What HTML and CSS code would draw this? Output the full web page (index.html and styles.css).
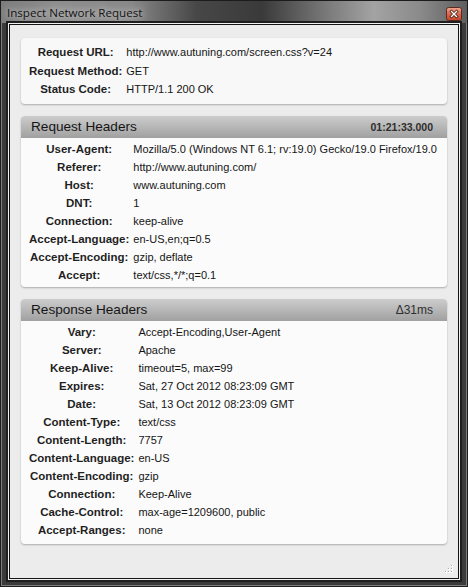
FILE: index.html
```html
<!DOCTYPE html>
<html>
<head>
<meta charset="utf-8">
<link rel="stylesheet" href="styles.css">
</head>
<body>
<div class="window">
  <div class="titlebar">
    <span class="title">Inspect Network Request</span>
    <svg class="close" width="16" height="14" viewBox="0 0 16 14">
      <defs>
        <linearGradient id="cg" x1="0" y1="0" x2="0" y2="1">
          <stop offset="0" stop-color="#f0a793"/>
          <stop offset="0.5" stop-color="#d9674c"/>
          <stop offset="1" stop-color="#c4442a"/>
        </linearGradient>
      </defs>
      <rect x="0.5" y="0.5" width="15" height="13" rx="2" fill="url(#cg)" stroke="#5b2a1e"/>
      <path d="M5.5 4.5 L10.5 9.5 M10.5 4.5 L5.5 9.5" stroke="#4a1a10" stroke-width="3" stroke-linecap="square"/>
      <path d="M5.5 4.5 L10.5 9.5 M10.5 4.5 L5.5 9.5" stroke="#fff" stroke-width="1.4" stroke-linecap="square"/>
    </svg>
  </div>
  <div class="client">
    <div class="card summary">
      <table class="kv">
        <tr><th>Request URL:</th><td>http://www.autuning.com/screen.css?v=24</td></tr>
        <tr><th>Request Method:</th><td>GET</td></tr>
        <tr><th>Status Code:</th><td>HTTP/1.1 200 OK</td></tr>
      </table>
    </div>

    <div class="card panel">
      <div class="panel-head"><span class="panel-title">Request Headers</span><span class="meta meta-time">01:21:33.000</span></div>
      <div class="panel-body">
        <table class="kv">
          <tr><th>User-Agent:</th><td>Mozilla/5.0 (Windows NT 6.1; rv:19.0) Gecko/19.0 Firefox/19.0</td></tr>
          <tr><th>Referer:</th><td>http://www.autuning.com/</td></tr>
          <tr><th>Host:</th><td>www.autuning.com</td></tr>
          <tr><th>DNT:</th><td>1</td></tr>
          <tr><th>Connection:</th><td>keep-alive</td></tr>
          <tr><th>Accept-Language:</th><td>en-US,en;q=0.5</td></tr>
          <tr><th>Accept-Encoding:</th><td>gzip, deflate</td></tr>
          <tr><th>Accept:</th><td>text/css,*/*;q=0.1</td></tr>
        </table>
      </div>
    </div>

    <div class="card panel">
      <div class="panel-head"><span class="panel-title">Response Headers</span><span class="meta meta-delta">Δ31ms</span></div>
      <div class="panel-body response">
        <table class="kv">
          <tr><th>Vary:</th><td>Accept-Encoding,User-Agent</td></tr>
          <tr><th>Server:</th><td>Apache</td></tr>
          <tr><th>Keep-Alive:</th><td>timeout=5, max=99</td></tr>
          <tr><th>Expires:</th><td>Sat, 27 Oct 2012 08:23:09 GMT</td></tr>
          <tr><th>Date:</th><td>Sat, 13 Oct 2012 08:23:09 GMT</td></tr>
          <tr><th>Content-Type:</th><td>text/css</td></tr>
          <tr><th>Content-Length:</th><td>7757</td></tr>
          <tr><th>Content-Language:</th><td>en-US</td></tr>
          <tr><th>Content-Encoding:</th><td>gzip</td></tr>
          <tr><th>Connection:</th><td>Keep-Alive</td></tr>
          <tr><th>Cache-Control:</th><td>max-age=1209600, public</td></tr>
          <tr><th>Accept-Ranges:</th><td>none</td></tr>
        </table>
      </div>
    </div>

    <svg class="grip" width="10" height="10" viewBox="0 0 10 10">
      <g fill="#fff">
        <rect x="7" y="1" width="2" height="2"/>
        <rect x="4" y="4" width="2" height="2"/><rect x="7" y="4" width="2" height="2"/>
        <rect x="1" y="7" width="2" height="2"/><rect x="4" y="7" width="2" height="2"/><rect x="7" y="7" width="2" height="2"/>
      </g>
      <g fill="#a8a8a8">
        <rect x="7" y="1" width="1" height="1"/>
        <rect x="4" y="4" width="1" height="1"/><rect x="7" y="4" width="1" height="1"/>
        <rect x="1" y="7" width="1" height="1"/><rect x="4" y="7" width="1" height="1"/><rect x="7" y="7" width="1" height="1"/>
      </g>
    </svg>
  </div>
</div>
</body>
</html>
```

FILE: styles.css
```css
html, body {
  margin: 0;
  padding: 0;
}
body {
  width: 468px;
  height: 587px;
  overflow: hidden;
  background: #2f2f2f;
}
.window {
  width: 468px;
  height: 587px;
  box-sizing: border-box;
  display: flex;
  flex-direction: column;
  background: #3b3b3b;
  border: 1px solid #1c1c1c;
  box-shadow: inset 0 0 0 1px #7d7d7d;
}
.titlebar {
  height: 22px;
  flex: none;
  display: flex;
  align-items: center;
  justify-content: space-between;
  padding: 0 5px 0 6px;
  background: linear-gradient(to right, #7c7c7c 0%, #8e8e8e 12%, #888 28%, #474747 42%, #3a3a3a 56%, #7a7a7a 70%, #a3a3a3 80%, #8a8a8a 90%, #5e5e5e 100%);
}
.title {
  font-family: "Open Sans", "DejaVu Sans", sans-serif;
  font-size: 11.6px;
  color: #141414;
  text-shadow: 0 0 6px #cfcfcf, 0 0 10px #c4c4c4;
  padding-top: 1px;
}
.close {
  display: block;
  margin-top: 4px;
}
.client {
  position: relative;
  flex: 1;
  margin: 1px 8px 7px 8px;
  padding: 13px 11px 0 11px;
  background: #ececec;
  border: 1px solid #141414;
  box-shadow: 0 0 0 1px #f1f1f1, 0 0 0 3px #1e1e1e;
  display: flex;
  flex-direction: column;
  gap: 12px;
  font-family: "Liberation Sans", Arial, sans-serif;
  font-size: 11px;
  color: #151515;
}
.card {
  background: #f8f8f8;
  border-radius: 4px;
  box-shadow: 0 1px 2px rgba(0, 0, 0, 0.28);
}
.summary {
  padding: 5px 0 5px 5px;
}
.summary .kv td, .summary .kv th {
  line-height: 18.5px;
}
.kv {
  border-collapse: separate;
  border-spacing: 2px 0;
}
.kv th {
  font-size: 11.5px;
  font-weight: bold;
  text-align: center;
  white-space: nowrap;
  padding: 0 1px;
  line-height: 18px;
  color: #1f1f1f;
}
.kv td {
  font-size: 11px;
  white-space: nowrap;
  padding: 0 1px;
  line-height: 18px;
}
.panel {
  background: #fbfbfb;
}
.panel-head {
  height: 22px;
  display: flex;
  align-items: center;
  justify-content: space-between;
  padding: 0 14px 0 10px;
  border-radius: 4px 4px 0 0;
  background: linear-gradient(#cdcdcd, #a0a0a0);
}
.panel-title {
  font-size: 13.6px;
  color: #151515;
}
.meta {
  color: #2e2e2e;
}
.meta-time {
  font-size: 10.5px;
  font-weight: bold;
}
.meta-delta {
  font-size: 12px;
}
.panel-body {
  padding: 2px 0 3px 5px;
}
.panel-body.response {
  padding-bottom: 5px;
}
.grip {
  position: absolute;
  right: 4px;
  bottom: 4px;
}
```
